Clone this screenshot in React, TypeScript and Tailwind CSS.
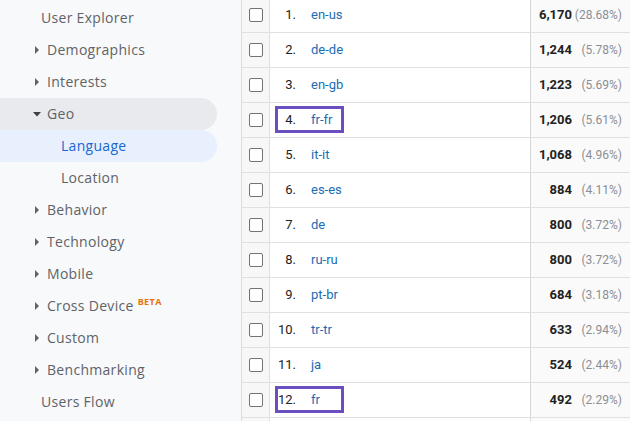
import React from "react";

type NavItem = { label: string; level: 0 | 1 | 2; arrow?: "right" | "down"; state?: "open" | "active"; beta?: boolean };

const nav: NavItem[] = [
  { label: "User Explorer", level: 0 },
  { label: "Demographics", level: 1, arrow: "right" },
  { label: "Interests", level: 1, arrow: "right" },
  { label: "Geo", level: 1, arrow: "down", state: "open" },
  { label: "Language", level: 2, state: "active" },
  { label: "Location", level: 2 },
  { label: "Behavior", level: 1, arrow: "right" },
  { label: "Technology", level: 1, arrow: "right" },
  { label: "Mobile", level: 1, arrow: "right" },
  { label: "Cross Device", level: 1, arrow: "right", beta: true },
  { label: "Custom", level: 1, arrow: "right" },
  { label: "Benchmarking", level: 1, arrow: "right" },
  { label: "Users Flow", level: 0 },
];

const rows = [
  ["en-us", "6,170", "(28.68%)"],
  ["de-de", "1,244", "(5.78%)"],
  ["en-gb", "1,223", "(5.69%)"],
  ["fr-fr", "1,206", "(5.61%)"],
  ["it-it", "1,068", "(4.96%)"],
  ["es-es", "884", "(4.11%)"],
  ["de", "800", "(3.72%)"],
  ["ru-ru", "800", "(3.72%)"],
  ["pt-br", "684", "(3.18%)"],
  ["tr-tr", "633", "(2.94%)"],
  ["ja", "524", "(2.44%)"],
  ["fr", "492", "(2.29%)"],
  ["", "", ""],
];

function Sidebar() {
  return (
    <div className="w-[241px] shrink-0 bg-[#f8f9fa] pt-[2px] font-['Open_Sans',sans-serif] text-[14px] tracking-[0.3px] text-[#5f6368]">
      {nav.map((n) => {
        const bg =
          n.state === "open"
            ? "bg-[#e8eaed] rounded-r-full"
            : n.state === "active"
            ? "bg-[#e8f0fe] rounded-r-full text-[#1967d2]"
            : "";
        const pad = n.level === 0 ? "pl-[41px]" : n.level === 1 ? "pl-[33px]" : "pl-[61px]";
        return (
          <div key={n.label} className={`h-[32px] w-[217px] flex items-center ${pad} ${bg}`}>
            {n.level === 1 && (
              <span className="w-[14px] flex items-center">
                {n.arrow === "down" ? (
                  <svg width="8" height="5" viewBox="0 0 8 5">
                    <path d="M0 0 L8 0 L4 4.5 Z" fill="#3c4043" />
                  </svg>
                ) : (
                  <svg width="4" height="8" viewBox="0 0 4 8" className="ml-[2px]">
                    <path d="M0 0 L4 4 L0 8 Z" fill="#5f6368" />
                  </svg>
                )}
              </span>
            )}
            <span className="leading-none">{n.label}</span>
            {n.beta && (
              <span className="ml-[4px] -mt-[10px] text-[9px] font-bold text-[#e8710a] leading-none tracking-[0.4px]">BETA</span>
            )}
          </div>
        );
      })}
    </div>
  );
}

function Table() {
  return (
    <div className="flex-1 relative -mt-[2px] font-['Roboto',sans-serif] text-[13px] border-l border-[#dadce0]">
      {rows.map((r, i) => (
        <div key={i} className="h-[35px] flex border-b border-[#e0e0e0] relative">
          <div className="w-[28px] shrink-0 bg-[#f7f7f7] border-r border-[#e0e0e0] flex items-center pl-[7px]">
            {r[0] !== "" && <div className="w-[14px] h-[14px] border-[1.5px] border-[#737373] rounded-[2px] bg-white" />}
          </div>
          <div className="flex-1 flex items-center bg-white">
            {r[0] !== "" && (
              <>
                <span className="w-[26px] text-right text-[#222]">{i + 1}.</span>
                <span className="ml-[15px] text-[#1a6db4]">{r[0]}</span>
              </>
            )}
          </div>
          <div className="w-[100px] shrink-0 bg-[#fafafa] border-l border-[#d6d6d6] flex items-center justify-end pr-[8px]">
            {r[0] !== "" && (
              <>
                <span className="font-bold text-[#222]">{r[1]}</span>
                <span className="w-[50px] text-right text-[12px] text-[#8a8f94]">{r[2]}</span>
              </>
            )}
          </div>
          {(i === 3 || i === 11) && (
            <div className="absolute left-[33px] top-[3px] w-[69px] h-[27px] border-[3px] border-[#6b4fc1]" />
          )}
        </div>
      ))}
    </div>
  );
}

export default function App() {
  return (
    <div className="w-[630px] h-[421px] overflow-hidden flex bg-white">
      <Sidebar />
      <Table />
    </div>
  );
}
